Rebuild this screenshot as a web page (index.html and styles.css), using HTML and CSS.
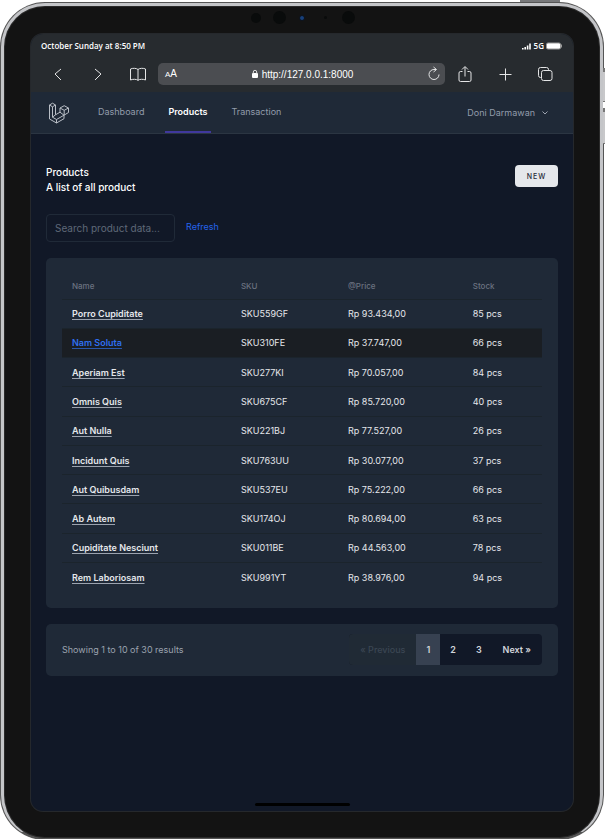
FILE: index.html
```html
<!DOCTYPE html>
<html lang="en">
<head>
<meta charset="utf-8">
<meta name="viewport" content="width=device-width, initial-scale=1">
<title>Products</title>
<link rel="stylesheet" href="styles.css">
</head>
<body>
<div class="device">
  <span class="power-key"></span>
  <span class="volume-keys"></span>
  <div class="sensors">
    <i class="lens lens-m"></i><i class="lens lens-l"></i><i class="lens lens-led"></i><i class="lens lens-s"></i><i class="lens lens-l"></i>
  </div>
  <div class="screen">
    <header class="browser">
      <div class="status">
        <span>October Sunday at 8:50 PM</span>
        <span class="signal">
          <svg width="10" height="7" viewBox="0 0 10 7" fill="#fff"><path d="M0 5h1.6v1.500H0zM2.400 4H4v2.500H2.400zM4.800 2.500h1.600v4H4.800zM7.200 .5h1.600v6H7.200z"/></svg>
          <span>5G</span>
          <svg width="17" height="8" viewBox="0 0 17 8"><rect x=".5" y="1" width="14" height="6" rx="1.500" fill="#fff" stroke="#999"/><path d="M15.500 2.500v3" stroke="#999"/></svg>
        </span>
      </div>
      <div class="toolbar">
        <button class="tool" aria-label="Back"><svg width="18" height="18" viewBox="0 0 18 18"><path d="m12 4-6 5 6 6"/></svg></button>
        <button class="tool" aria-label="Forward"><svg width="18" height="18" viewBox="0 0 18 18"><path d="m6 4 6 5-6 6"/></svg></button>
        <button class="tool" aria-label="Bookmarks"><svg width="18" height="18" viewBox="0 0 18 18"><path d="M9 4.500C7.500 3 3.500 3 1.500 4v11c2-1 6-1 7.500.3C10.500 14 14.500 14 16.500 15V4C14.500 3 10.500 3 9 4.500v10.800"/></svg></button>
        <div class="address">
          <span class="text-size"><small>A</small>A</span>
          <span class="url"><svg width="8" height="10" viewBox="0 0 8 10"><rect x="1" y="4" width="6" height="5" rx="1" fill="#fff"/><path d="M2.300 4.500V3a1.700 1.700 0 0 1 3.400 0v1.500" fill="none" stroke="#ddd"/></svg>http://127.0.0.1:8000</span>
          <button class="reload" aria-label="Reload"><svg width="14" height="16" viewBox="0 0 14 16"><path d="M12 8.500A5 5 0 1 1 7 3.500h2M6.500 1l3 2.500-3 2.500"/></svg></button>
        </div>
        <button class="tool" aria-label="Share"><svg width="18" height="18" viewBox="0 0 18 18"><path d="M6.500 6.500h-2a1.500 1.500 0 0 0-1.500 1.500v7a1.500 1.500 0 0 0 1.500 1.500h9a1.500 1.500 0 0 0 1.500-1.500V8a1.500 1.500 0 0 0-1.500-1.500h-2M9 11.500V2M6 4.500 9 1.500l3 3"/></svg></button>
        <button class="tool" aria-label="New tab"><svg width="18" height="18" viewBox="0 0 18 18"><path d="M9.500 3.500v12M3.500 9.500h12"/></svg></button>
        <button class="tool" aria-label="Tabs"><svg width="18" height="18" viewBox="0 0 18 18"><rect x="5.500" y="5.500" width="10.500" height="10" rx="2"/><path d="M5.500 12.500h-1a2 2 0 0 1-2-2v-6a2 2 0 0 1 2-2h6a2 2 0 0 1 2 2v1"/></svg></button>
      </div>
    </header>
    <nav class="nav">
      <a class="logo" href="#" aria-label="Home"><svg width="22" height="22" viewBox="0 0 22 22"><path d="M1.500 3 4.500 1.200 7.500 3v9.800l4.500-2.600M1.500 3l3 1.800L7.500 3M1.500 3v14l7 4 7.500-4.300v-3.500M4.500 4.800v10.400l4 2.300 7.500-4.300M8.500 17.500V21M4.500 15.200l3-2.400M12 10.200l4 3M12 10.200V6l4.200-2.300L20.500 6v4.500L16 13.200M12 6l4.200 2.300L20.500 6M16.200 8.300v4.900"/></svg></a>
      <a class="tab" href="#">Dashboard</a>
      <a class="tab active" href="#" aria-current="page">Products</a>
      <a class="tab" href="#">Transaction</a>
      <button class="account">Doni Darmawan<svg width="8" height="6" viewBox="0 0 8 6"><path d="m1.500 1.500 2.500 2.500 2.500-2.500"/></svg></button>
    </nav>
    <main class="page">
      <div class="heading">
        <div><h1>Products</h1><p>A list of all product</p></div>
        <button class="new">NEW</button>
      </div>
      <div class="filters">
        <input type="text" class="search" placeholder="Search product data..." aria-label="Search product data">
        <a class="refresh" href="#">Refresh</a>
      </div>
      <section class="card">
        <table class="products">
          <colgroup><col class="c-name"><col class="c-sku"><col class="c-price"><col class="c-stock"></colgroup>
          <thead><tr><th>Name</th><th>SKU</th><th>@Price</th><th>Stock</th></tr></thead>
          <tbody>
            <tr><td><a href="#">Porro Cupiditate</a></td><td>SKU559GF</td><td>Rp 93.434,00</td><td>85 pcs</td></tr>
            <tr class="hovered"><td><a href="#">Nam Soluta</a></td><td>SKU310FE</td><td>Rp 37.747,00</td><td>66 pcs</td></tr>
            <tr><td><a href="#">Aperiam Est</a></td><td>SKU277KI</td><td>Rp 70.057,00</td><td>84 pcs</td></tr>
            <tr><td><a href="#">Omnis Quis</a></td><td>SKU675CF</td><td>Rp 85.720,00</td><td>40 pcs</td></tr>
            <tr><td><a href="#">Aut Nulla</a></td><td>SKU221BJ</td><td>Rp 77.527,00</td><td>26 pcs</td></tr>
            <tr><td><a href="#">Incidunt Quis</a></td><td>SKU763UU</td><td>Rp 30.077,00</td><td>37 pcs</td></tr>
            <tr><td><a href="#">Aut Quibusdam</a></td><td>SKU537EU</td><td>Rp 75.222,00</td><td>66 pcs</td></tr>
            <tr><td><a href="#">Ab Autem</a></td><td>SKU174OJ</td><td>Rp 80.694,00</td><td>63 pcs</td></tr>
            <tr><td><a href="#">Cupiditate Nesciunt</a></td><td>SKU011BE</td><td>Rp 44.563,00</td><td>78 pcs</td></tr>
            <tr><td><a href="#">Rem Laboriosam</a></td><td>SKU991YT</td><td>Rp 38.976,00</td><td>94 pcs</td></tr>
          </tbody>
        </table>
      </section>
      <section class="card results">
        <p>Showing 1 to 10 of 30 results</p>
        <div class="pager">
          <button class="prev" disabled>« Previous</button><button class="current" aria-current="page">1</button><button>2</button><button>3</button><button class="next">Next »</button>
        </div>
      </section>
    </main>
    <div class="home-bar"></div>
  </div>
</div>
</body>
</html>
```
FILE: styles.css
```css
* { box-sizing: border-box; }
body {
  margin: 0;
  padding: 3px 2px 0 1px;
  min-height: 100vh;
  display: flex;
  background: #fff;
  color: #e5e7eb;
  font: 9px/15px Inter, "Liberation Sans", sans-serif;
}
h1, p { margin: 0; font: inherit; }
a { color: inherit; text-decoration: none; }
button { padding: 0; border: 0; background: none; color: inherit; font: inherit; }

/* Tablet body */
.device {
  position: relative;
  flex: 1;
  display: flex;
  flex-direction: column;
  padding: 28px 27px 27px;
  border: 3px solid #c4c5c8;
  border-bottom: 1px solid #555;
  border-radius: 44px;
  background: #131313;
  box-shadow: inset 0 0 0 1px #2a2a2a, 0 0 0 1px #555;
}
.power-key { position: absolute; top: -6px; right: 40px; width: 40px; height: 2px; background: #77787a; }
.volume-keys {
  position: absolute;
  top: 62px;
  right: -5px;
  width: 2px;
  height: 76px;
  background: linear-gradient(#777 0 4px, #c8c8ca 4px 33px, #777 33px 34px, #fff 34px 40px, #777 40px 44px, #c8c8ca 44px 75px, #777 75px);
}
.sensors {
  position: absolute;
  top: 5px;
  left: 0;
  right: 0;
  height: 13px;
  display: grid;
  grid-template-columns: repeat(5, 23px);
  place-content: center;
  place-items: center;
}
.lens { width: 13px; height: 13px; border-radius: 50%; background: #090b0b; }
.lens-m { width: 10px; height: 10px; }
.lens-led { width: 6px; height: 6px; border: 1px solid #0c1018; background: #17407b; }
.lens-s { width: 3px; height: 3px; }

.screen {
  flex: 1;
  display: flex;
  flex-direction: column;
  overflow: hidden;
  border-radius: 12px;
  background: #111827;
  box-shadow: 0 0 0 1px #25282c;
}

/* Browser chrome */
.browser { padding: 4px 8px 7px 7px; background: #272b2f; color: #fff; }
.status {
  display: flex;
  justify-content: space-between;
  padding: 0 2px 0 3px;
  line-height: 16px;
  font-family: "Open Sans", sans-serif;
  font-size: 8px;
  font-weight: 600;
}
.signal { display: flex; align-items: center; gap: 2px; }
.toolbar { display: flex; align-items: center; padding-top: 9px; }
.tool { width: 40px; height: 22px; display: grid; place-items: center; }
.tool svg, .reload svg { fill: none; stroke: #e4e5e6; stroke-width: 1; }
.address {
  flex: 1;
  height: 22px;
  display: flex;
  align-items: center;
  justify-content: space-between;
  padding: 0 4px 0 7px;
  border-radius: 5px;
  background: #4b4d51;
  font-family: "Liberation Sans", sans-serif;
  font-size: 10px;
}
.text-size small { font-size: 8px; }
.url { display: flex; align-items: center; gap: 3px; }
.reload { display: grid; }

/* Application navigation */
.nav {
  height: 42px;
  display: flex;
  padding: 0 24px 0 17px;
  border-bottom: 1px solid #2b3542;
  background: #1f2937;
  color: #929cab;
}
.logo { display: flex; align-items: center; margin-right: 25px; }
.logo svg { fill: none; stroke: #b9bec6; stroke-width: 1; stroke-linejoin: round; }
.tab { display: flex; align-items: center; margin-right: 18px; padding: 0 3px; border-bottom: 2px solid transparent; }
.tab.active { border-color: #40389d; color: #fff; font-weight: 600; }
.account { display: flex; align-items: center; gap: 6px; margin-left: auto; }
.account svg { fill: none; stroke: #9ca3af; stroke-width: 1; }

/* Page */
.page { flex: 1; padding: 31px 15px 0; }
.heading { display: flex; justify-content: space-between; font-size: 10px; font-weight: 500; color: #fff; }
.new {
  width: 43px;
  height: 22px;
  border-radius: 4px;
  background: #e5e7eb;
  color: #1f2937;
  font-size: 7px;
  font-weight: 500;
  letter-spacing: 1px;
}
.filters { display: flex; gap: 11px; margin: 19px 0 16px; }
.search {
  width: 129px;
  height: 28px;
  padding: 0 0 0 8px;
  border: 1px solid #202a38;
  border-radius: 4px;
  background: #111827;
  color: #e5e7eb;
  font: inherit;
  font-size: 10px;
}
.search::placeholder { color: #5f6878; }
.refresh { margin-top: 5px; color: #2563eb; }
.card { padding: 16px 16px 17px; border-radius: 5px; background: #1f2937; }

.products { width: 100%; height: 317px; table-layout: fixed; border-collapse: collapse; }
.products th, .products td { padding: 0 10px; text-align: left; }
.products th { height: 25px; color: #6b7280; font-size: 8px; font-weight: 500; }
.products tbody tr { border-top: 1px solid #1b242c; }
.products td a { font-weight: 600; text-decoration: underline #9ca3af; text-underline-offset: 2px; }
.products .hovered { background: #1a1e23; }
.products .hovered a { color: #2f6ff0; text-decoration-color: #2a57ad; }
.c-name { width: 35.2%; }
.c-sku { width: 22.3%; }
.c-price { width: 26%; }
.c-stock { width: 16.5%; }

.results { display: flex; align-items: center; justify-content: space-between; margin-top: 16px; padding: 10px 16px 11px; color: #9ca3af; }
.pager { display: flex; overflow: hidden; border-radius: 4px; background: #111827; color: #d1d5db; font-weight: 600; }
.pager button { height: 31px; padding: 0 10px; }
.pager .prev { padding: 0 11px; background: #202a35; color: #3b4653; font-weight: 500; }
.pager .current { background: #374151; }
.pager .next { padding: 0 11px; }

.home-bar { align-self: center; width: 95px; height: 3px; margin: 5px; border-radius: 2px; background: #000; }
```
